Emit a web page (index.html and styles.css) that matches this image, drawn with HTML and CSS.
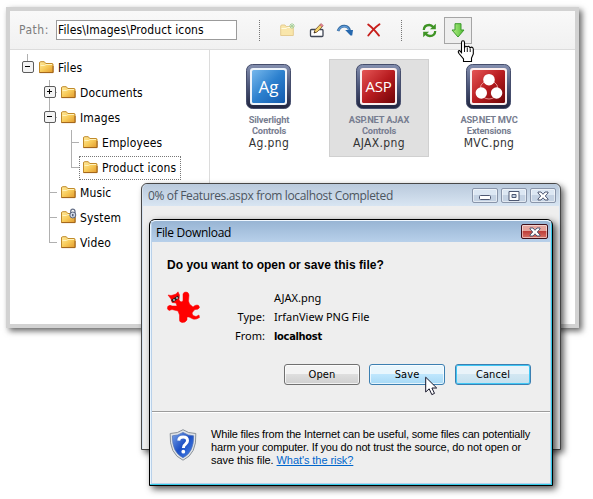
FILE: index.html
```
<!DOCTYPE html>
<html lang="en">
<head>
<meta charset="utf-8">
<title>File explorer</title>
<link rel="stylesheet" href="styles.css">
</head>
<body>
<svg class="defs" width="0" height="0" aria-hidden="true">
  <defs>
    <linearGradient id="gold" x2="1" y2="1"><stop offset="0" stop-color="#ffeaa0"/><stop offset=".5" stop-color="#f8cc5a"/><stop offset="1" stop-color="#e29a2c"/></linearGradient>
    <linearGradient id="frame" x2="0" y2="1"><stop offset="0" stop-color="#8590b0"/><stop offset=".5" stop-color="#4b5578"/><stop offset="1" stop-color="#20243f"/></linearGradient>
    <linearGradient id="blue" x2="1" y2="1"><stop offset="0" stop-color="#76b8ec"/><stop offset=".5" stop-color="#2c80ce"/><stop offset="1" stop-color="#1259ae"/></linearGradient>
    <linearGradient id="red" x2="1" y2="1"><stop offset="0" stop-color="#e55555"/><stop offset=".5" stop-color="#b81c20"/><stop offset="1" stop-color="#700407"/></linearGradient>
    <linearGradient id="green" x2="1"><stop offset="0" stop-color="#b5ee8a"/><stop offset="1" stop-color="#4fbd31"/></linearGradient>
    <linearGradient id="shield" x2="1" y2="1"><stop offset="0" stop-color="#7ba4e8"/><stop offset=".5" stop-color="#1c4fc4"/><stop offset="1" stop-color="#4b87ea"/></linearGradient>
    <symbol id="folder" viewBox="0 0 15 13">
      <path d="M.5 11.5V2Q.5.7 1.7.7H5.3L6.8 2.5H13Q14 2.5 14 3.5V11.5Z" fill="url(#gold)" stroke="#c08a2a"/>
      <path d="M1.5 4.5H5.5L7 3.5H13" fill="none" stroke="#fff2bc"/>
      <path d="M.5 11.6H14.1V5" fill="none" stroke="#a3641b"/>
    </symbol>
    <symbol id="cross" viewBox="0 0 12 10">
      <path d="M1 1H4L6 3.3 8 1H11V2L8.3 5 11 8V9H8L6 6.8 4 9H1V8L3.7 5 1 2Z" fill="#fff" stroke="#4e5872"/>
    </symbol>
    <symbol id="minus" viewBox="0 0 12 12">
      <rect x=".5" y=".5" width="11" height="11" rx="1.5" fill="#f3f3f3" stroke="#5c5c5c"/><path d="M3 5.5H8" stroke="#000"/>
    </symbol>
    <symbol id="plus" viewBox="0 0 12 12">
      <rect x=".5" y=".5" width="11" height="11" rx="1.5" fill="#f3f3f3" stroke="#5c5c5c"/><path d="M3 5.5H8M5.5 3V8" stroke="#000"/>
    </symbol>
  </defs>
</svg>

<main class="explorer">
  <header class="toolbar">
    <span class="path-label">Path:</span>
    <div class="path-box">Files\Images\Product icons</div>
    <i class="sep"></i>
    <svg class="tool new" width="16" height="14" viewBox="0 0 16 14"><path d="M.7 12.5V3Q.7 2 2 2H5L6.2 3.5H13.3V12.5Z" fill="#f9e6ab" stroke="#e5cc92"/><path d="M1.5 5.5H6L7.5 4.5H12" stroke="#fffae0" fill="none"/><path d="M12 0V6M9 3H15M10 1L14 5M14 1L10 5" stroke="#a9d19d"/></svg>
    <svg class="tool rename" width="16" height="15" viewBox="0 0 16 15"><rect x="1.5" y="6.5" width="12.5" height="7" rx="1" fill="#fff" stroke="#3f4654" stroke-width="1.3"/><path d="M5 10L6 7 11.5 1.2 13.8 3.3 8 9Z" fill="#f3d56b" stroke="#8b6840"/><path d="M10.8 1.9L12.2.6 14.3 2.5 13 4Z" fill="#eb8791" stroke="#ab6371" stroke-width=".6"/><path d="M5 10L5.6 8.3 6.8 9.4Z" fill="#222"/></svg>
    <svg class="tool move" width="16" height="12" viewBox="0 0 16 12"><path d="M1 7Q3 2 7.5 2.2Q12 2.5 12.7 7" fill="none" stroke="#34699f" stroke-width="2.7"/><path d="M1.3 6.5Q3.3 2.2 7.5 2.3Q11 2.5 12 6" fill="none" stroke="#5f9bd8" stroke-width="1.2"/><path d="M8.2 6H16L15.2 11.5H13.5Z" fill="#2668ae"/></svg>
    <svg class="tool delete" width="14" height="14" viewBox="0 0 14 14"><path d="M1.2 1.5Q6 5 12 12.6M12.5 1.2Q7 5 1.3 12.5" fill="none" stroke="#c71e1b" stroke-width="1.9" stroke-linecap="round"/></svg>
    <i class="sep second"></i>
    <svg class="tool refresh" width="15" height="15" viewBox="0 0 15 15"><path d="M1.8 7Q2 2 7.3 2Q9.5 2 11.5 4.2" fill="none" stroke="#3f9425" stroke-width="2.3"/><path d="M13.8.7V6.3H8Z" fill="#3f9425"/><path d="M13.2 8Q13 13 7.7 13Q5.5 13 3.5 10.8" fill="none" stroke="#3f9425" stroke-width="2.3"/><path d="M1.2 14.3V8.7H7Z" fill="#3f9425"/></svg>
    <div class="download"><svg width="14" height="15" viewBox="0 0 14 15"><path d="M4 .7H10V7H13L7 14 1 7H4Z" fill="url(#green)" stroke="#3c992c" stroke-linejoin="round"/></svg></div>
  </header>

  <div class="panes">
    <nav class="tree">
      <ul class="root">
        <li>
          <div class="row"><svg class="toggle"><use href="#minus"/></svg><svg class="folder"><use href="#folder"/></svg><span>Files</span></div>
          <ul class="branch">
            <li><div class="row"><svg class="toggle"><use href="#plus"/></svg><svg class="folder"><use href="#folder"/></svg><span>Documents</span></div></li>
            <li><div class="row"><svg class="toggle"><use href="#minus"/></svg><svg class="folder"><use href="#folder"/></svg><span>Images</span></div>
              <ul class="branch">
                <li><div class="row leaf"><svg class="folder"><use href="#folder"/></svg><span>Employees</span></div></li>
                <li><div class="row leaf"><div class="selected"><svg class="folder"><use href="#folder"/></svg><span>Product icons</span></div></div></li>
              </ul>
            </li>
            <li><div class="row leaf"><svg class="folder"><use href="#folder"/></svg><span>Music</span></div></li>
            <li><div class="row leaf"><svg class="folder locked" viewBox="0 0 15 13"><use href="#folder" width="15" height="13"/><path d="M9.7 3V.5Q9.7-1.8 11.8-1.8T14 .5V3" fill="none" stroke="#69738a" stroke-width="1.3"/><circle cx="11.8" cy="4" r="3" fill="#cfd8e7" stroke="#59647d"/><path d="M11.8 3V5.3" stroke="#39435a" stroke-width="1.2"/></svg><span>System</span></div></li>
            <li><div class="row leaf"><svg class="folder"><use href="#folder"/></svg><span>Video</span></div></li>
          </ul>
        </li>
      </ul>
    </nav>

    <section class="files">
      <figure class="file">
        <svg class="thumb" viewBox="0 0 45 45"><rect x=".5" y=".5" width="44" height="44" rx="6" fill="url(#frame)" stroke="#454d6c"/><rect x="4" y="4" width="37" height="37" rx="3" fill="#eef4fb"/><rect x="6" y="6" width="33" height="33" rx="1.5" fill="url(#blue)"/><text class="glyph ag" x="22.5" y="28.5">Ag</text></svg>
        <p class="product">Silverlight<br>Controls</p>
        <figcaption>Ag.png</figcaption>
      </figure>
      <figure class="file active">
        <svg class="thumb" viewBox="0 0 45 45"><rect x=".5" y=".5" width="44" height="44" rx="6" fill="url(#frame)" stroke="#454d6c"/><rect x="4" y="4" width="37" height="37" rx="3" fill="#fbeeee"/><rect x="6" y="6" width="33" height="33" rx="1.5" fill="url(#red)"/><text class="glyph asp" x="22.5" y="28">ASP</text></svg>
        <p class="product">ASP.NET AJAX<br>Controls</p>
        <figcaption>AJAX.png</figcaption>
      </figure>
      <figure class="file">
        <svg class="thumb" viewBox="0 0 45 45"><rect x=".5" y=".5" width="44" height="44" rx="6" fill="url(#frame)" stroke="#454d6c"/><rect x="4" y="4" width="37" height="37" rx="3" fill="#fbeeee"/><rect x="6" y="6" width="33" height="33" rx="1.5" fill="url(#red)"/><path d="M18 18Q14 20 14 26M28 18Q32 20 32 26M17 33Q23 37 29 33" fill="none" stroke="#e58d8d"/><g fill="#fff"><circle cx="23" cy="15.7" r="5.8"/><circle cx="15.3" cy="29" r="5.7"/><circle cx="30.6" cy="29" r="5.7"/></g></svg>
        <p class="product">ASP.NET MVC<br>Extensions</p>
        <figcaption>MVC.png</figcaption>
      </figure>
    </section>
  </div>
</main>

<section class="window progress">
  <header class="titlebar">
    <h2>0% of Features.aspx from localhost Completed</h2>
    <div class="buttons">
      <i class="wbtn"><svg width="12" height="10" viewBox="0 0 12 10"><rect x=".5" y="4.5" width="11" height="4" rx="1" fill="#fff" stroke="#4e5872"/></svg></i>
      <i class="wbtn"><svg width="12" height="10" viewBox="0 0 12 10"><path d="M1 .5H11V9.5H1ZM4 3.5V6.5H8V3.5Z" fill="#fff" stroke="#4e5872" fill-rule="evenodd"/></svg></i>
      <i class="wbtn"><svg width="12" height="10"><use href="#cross"/></svg></i>
    </div>
  </header>
</section>

<section class="window dialog">
  <header class="titlebar">
    <h2>File Download</h2>
    <i class="wbtn close"><svg width="12" height="10"><use href="#cross"/></svg></i>
  </header>
  <div class="content">
    <h3>Do you want to open or save this file?</h3>
    <div class="details">
      <svg class="splat" width="34" height="33" viewBox="0 0 34 33"><path d="M1 4L4 4.5 6 4 9 3 11 .8 12.5 4 12 9 14 11 16 10 16 3Q16.5 1 19 1T22 4L21.5 10 22.5 13 26 16 28 14.5Q32 13 32.5 16.5Q31.5 19 28 18.5L26.5 20 25 22 26 24.5 29 25.5 32 24 32.5 26.5Q29 29 26 28L22 26 20 26 20 29Q18 32 15 31.5Q12 31 12.5 28L12.5 24 11 20 5 18.5 2 19.5Q-.5 17.5.7 15.5Q3 13.5 5 15L10 15 9 12 5 11.5 4 8Z" fill="#f00" stroke="#f00" stroke-width=".5"/><path d="M4 9L11 4.5 12 7 6 11.5Z" fill="#222"/><circle cx="7" cy="9" r=".9" fill="#ccc"/><circle cx="10" cy="7" r=".9" fill="#ccc"/></svg>
      <dl>
        <dt></dt><dd>AJAX.png</dd>
        <dt>Type:</dt><dd>IrfanView PNG File</dd>
        <dt>From:</dt><dd class="strong">localhost</dd>
      </dl>
    </div>
    <div class="actions">
      <button class="open">Open</button>
      <button class="save">Save</button>
      <button class="cancel">Cancel</button>
    </div>
  </div>
  <footer class="notice">
    <svg width="28" height="32" viewBox="0 0 28 32"><path d="M14 .7Q19 4.5 26.8 4.5Q28 25 14 31.2Q0 25 1.2 4.5Q9 4.5 14 .7Z" fill="#dfe3e7" stroke="#8b9299"/><path d="M14 3.4Q19 6.8 24.6 6.8Q25 23.5 14 28.7Q3 23.5 3.4 6.8Q9 6.8 14 3.4Z" fill="url(#shield)" stroke="#5272b8" stroke-width=".7"/><path d="M9.7 11.7Q10 8 14.2 8Q18.5 8 18.5 11.8Q18.5 13.7 16.4 15.2Q14.4 16.5 14.4 19" fill="none" stroke="#fff" stroke-width="3"/><circle cx="14.3" cy="22.7" r="1.9" fill="#fff"/></svg>
    <p><span>While files from the Internet can be useful, some files can potentially</span><br><span class="second">harm your computer. If you do not trust the source, do not open or</span><br><span class="third">save this file. <a>What's the risk?</a></span></p>
  </footer>
</section>

<svg class="cursor hand" width="18" height="23" viewBox="0 0 18 23"><path d="M4.5 12.5V2.5Q4.5.7 6 .7T7.5 2.5V8Q8.2 5.2 10.3 7Q11.5 5.3 13 7.8Q15.7 6 16.3 9V14L14.5 18V21.5H6.5V19L2 13.5Q.3 10.5 2.6 10.5Z" fill="#fff" stroke="#000" stroke-width="1.1"/><path d="M7.5 8V12M10.3 8V12M13.2 8.5V12" stroke="#000" stroke-width=".9"/></svg>
<svg class="cursor arrow" width="13" height="20" viewBox="0 0 13 20"><path d="M.7 1.2V16L4.2 12.8 6.8 18.6 9.5 17.4 6.9 12H11.7Z" fill="#fff" stroke="#17172b"/></svg>
</body>
</html>
```
FILE: styles.css
```
* { box-sizing: border-box; }
body {
  margin: 0;
  height: 499px;
  overflow: hidden;
  background: #fff;
  padding: 7px 14px 0 6px;
  font: 12px/15px "DejaVu Sans Condensed", "Noto Sans", sans-serif;
  color: #000;
}
ul, h2, h3, p, dl, dd, figure { margin: 0; padding: 0; }
ul { list-style: none; }
.defs { position: absolute; }
svg { flex: none; overflow: visible; }

/* Explorer */
.explorer {
  width: 573px;
  height: 321px;
  border: 4px solid #d2d2d2;
  background: #fff;
  box-shadow: 3px 3px 6px rgba(0, 0, 0, .6);
}
.toolbar {
  display: flex;
  align-items: center;
  height: 39px;
  padding-left: 9px;
  border-bottom: 1px solid #dcdcdc;
  background: linear-gradient(#f9f9f9, #f1f1f1);
}
.path-label { width: 37px; padding-top: 1px; color: #7d7d7d; letter-spacing: .5px; }
.path-box {
  width: 181px;
  height: 20px;
  padding: 2px 1px;
  border: 1px solid #9b9b9b;
  background: #fff;
  letter-spacing: .12px;
  white-space: nowrap;
}
.sep {
  width: 1px;
  height: 21px;
  margin-left: 22px;
  background: repeating-linear-gradient(#777 0 1px, transparent 1px 2px);
}
.sep.second { margin-left: 20px; }
.tool.new { margin-left: 20px; }
.tool.rename { margin-left: 13px; }
.tool.move { margin-left: 12px; }
.tool.delete { margin-left: 14px; }
.tool.refresh { margin-left: 20px; }
.download {
  display: grid;
  place-items: center;
  width: 28px;
  height: 27px;
  margin-left: 7px;
  border: 1px solid #a5a5a5;
  background: #eee;
}
.panes { display: flex; height: 274px; }

.tree { width: 200px; padding: 5px 0 0 12px; border-right: 1px solid #dcdcdc; letter-spacing: .14px; }
.tree li { position: relative; }
.root > li::before {
  content: "";
  position: absolute;
  left: 5px;
  top: -1px;
  height: 8px;
  border-left: 1px solid #b0b0b0;
}
.branch { padding-left: 22px; }
.branch > li::before {
  content: "";
  position: absolute;
  left: 5px;
  top: 0;
  bottom: 0;
  border-left: 1px solid #b0b0b0;
}
.branch > li:last-child::before { bottom: auto; height: 12px; }
.branch > li::after {
  content: "";
  position: absolute;
  left: 5px;
  top: 12px;
  width: 8px;
  border-top: 1px solid #b0b0b0;
}
.row { display: flex; align-items: center; height: 25px; position: relative; z-index: 1; }
.row.leaf { padding-left: 17px; }
.row span { margin-left: 4px; padding-top: 1px; }
.toggle { width: 12px; height: 12px; margin: -1px 5px 0 0; }
.folder { width: 15px; height: 13px; margin-top: -1px; }
.selected {
  display: flex;
  align-items: center;
  width: 102px;
  height: 24px;
  margin-left: -4px;
  padding-left: 3px;
  border: 1px dotted #777;
}

.files { display: flex; gap: 10px; padding: 9px 0 0 9px; }
.file {
  width: 100px;
  height: 98px;
  border: 1px solid transparent;
  padding-top: 4px;
  text-align: center;
}
.file.active { border-color: #d0d0d0; background: #e0e0e0; }
.thumb { display: block; width: 45px; height: 45px; margin: 0 auto 0 26px; }
.glyph { fill: #fff; text-anchor: middle; font-family: "Open Sans", sans-serif; }
.glyph.ag { font-size: 17px; }
.glyph.asp { font-size: 15px; letter-spacing: -.2px; }
.product {
  padding-top: 5px;
  color: #777d90;
  font: bold 9.3px/11px Roboto, sans-serif;
  letter-spacing: -.15px;
}
figcaption { line-height: 14px; letter-spacing: .35px; color: #333; }

/* Windows */
.window { position: absolute; border: 1px solid #333; border-radius: 6px 6px 0 0; }
.titlebar { display: flex; justify-content: space-between; }
.titlebar h2 { font: 12px/15px "Open Sans", sans-serif; white-space: nowrap; }
.progress {
  left: 141px;
  top: 183px;
  width: 420px;
  height: 267px;
  padding: 0 1px 1px;
  border-color: #474747;
  background: #d8e4f1;
  box-shadow: 3px 3px 6px rgba(0, 0, 0, .6);
}
.progress::after { content: ""; display: block; height: 243px; background: #eee; }
.progress .titlebar {
  height: 22px;
  padding: 4px 3px 0 5px;
  border-radius: 5px 5px 0 0;
  background: linear-gradient(#b9c9dc, #d8e5f2);
}
.progress h2 { color: #4c5560; letter-spacing: -.35px; }
.buttons { display: flex; gap: 3px; }
.wbtn {
  display: grid;
  place-items: center;
  width: 26px;
  height: 15px;
  border: 1px solid #8995aa;
  border-radius: 2px;
  background: linear-gradient(#dce7f3 50%, #c4d2e3 50%);
  box-shadow: inset 0 0 0 1px rgba(255, 255, 255, .5);
}
.dialog {
  left: 149px;
  top: 219px;
  width: 404px;
  height: 267px;
  border-color: #000;
  background: #eee;
  box-shadow: inset -1px -1px #34cbe8, inset 1px 1px #e9f5ff, 3px 3px 7px rgba(0, 0, 0, .7);
}
.dialog::before {
  content: "";
  position: absolute;
  inset: 1px;
  border: solid #b9d1ea;
  border-width: 0 1px 1px;
  pointer-events: none;
}
.dialog .titlebar {
  height: 22px;
  margin: 0 1px;
  padding: 3px 3px 0 5px;
  border-top: 1px solid #eff7ff;
  border-radius: 5px 5px 0 0;
  background: linear-gradient(#98b5d4, #b8d0ea);
}
.dialog h2 { line-height: 17px; letter-spacing: -.3px; }
.wbtn.close { width: 27px; border-color: #3f0f19; background: linear-gradient(#e5a49c 45%, #bf3f3a 50%, #d77167); }
.content { height: 169px; padding: 15px 0 0 17px; }
h3 { font: bold 12px/16px "Liberation Sans", sans-serif; letter-spacing: .02px; }
.details { display: flex; margin-top: 17px; }
.splat { margin-top: 1px; }
dl {
  display: grid;
  grid-template-columns: 64px auto;
  column-gap: 9px;
  grid-auto-rows: 19px;
  margin-top: -2px;
  font: 11px/19px "Noto Sans", sans-serif;
}
dt { text-align: right; }
dd.strong { font: bold 11px/21px "DejaVu Sans Condensed", sans-serif; letter-spacing: -.3px; }
.actions { display: flex; gap: 10px; padding: 19px 0 0 117px; }
button {
  width: 76px;
  height: 21px;
  padding: 1px 0 0;
  border: 1px solid #707070;
  border-radius: 3px;
  background: linear-gradient(#f3f3f3 48%, #dedede 50%, #cfcfcf);
  box-shadow: inset 0 0 0 1px rgba(255, 255, 255, .7);
  color: #000;
  font: 11px/18px "DejaVu Sans Condensed", sans-serif;
  letter-spacing: .1px;
}
.save { margin-left: -1px; border-color: #3c7fb1; background: linear-gradient(#e8f6fd 48%, #bee6fd 50%, #a7d9f5); }
.cancel { border-color: #3c7fb1; background: linear-gradient(#e9f3f9 48%, #d2e7f2 50%, #c5e0ee); box-shadow: inset 0 0 0 1px #3fc7f5; }
.notice {
  display: flex;
  height: 73px;
  margin: 0 2px;
  padding: 16px 0 0 17px;
  border-top: 1px solid #9c9c9c;
  box-shadow: inset 0 1px #fff;
}
.notice svg { margin-top: 1px; }
.notice p { margin-left: 14px; font: 11px/13px "Liberation Sans", sans-serif; white-space: nowrap; }
.notice p span { letter-spacing: -.174px; }
.notice p .second { letter-spacing: -.158px; }
.notice p .third { letter-spacing: -.07px; }
.notice a { color: #06c; text-decoration: underline; }

.cursor { position: absolute; }
.hand { left: 457px; top: 40px; }
.arrow { left: 425px; top: 376px; }
```
